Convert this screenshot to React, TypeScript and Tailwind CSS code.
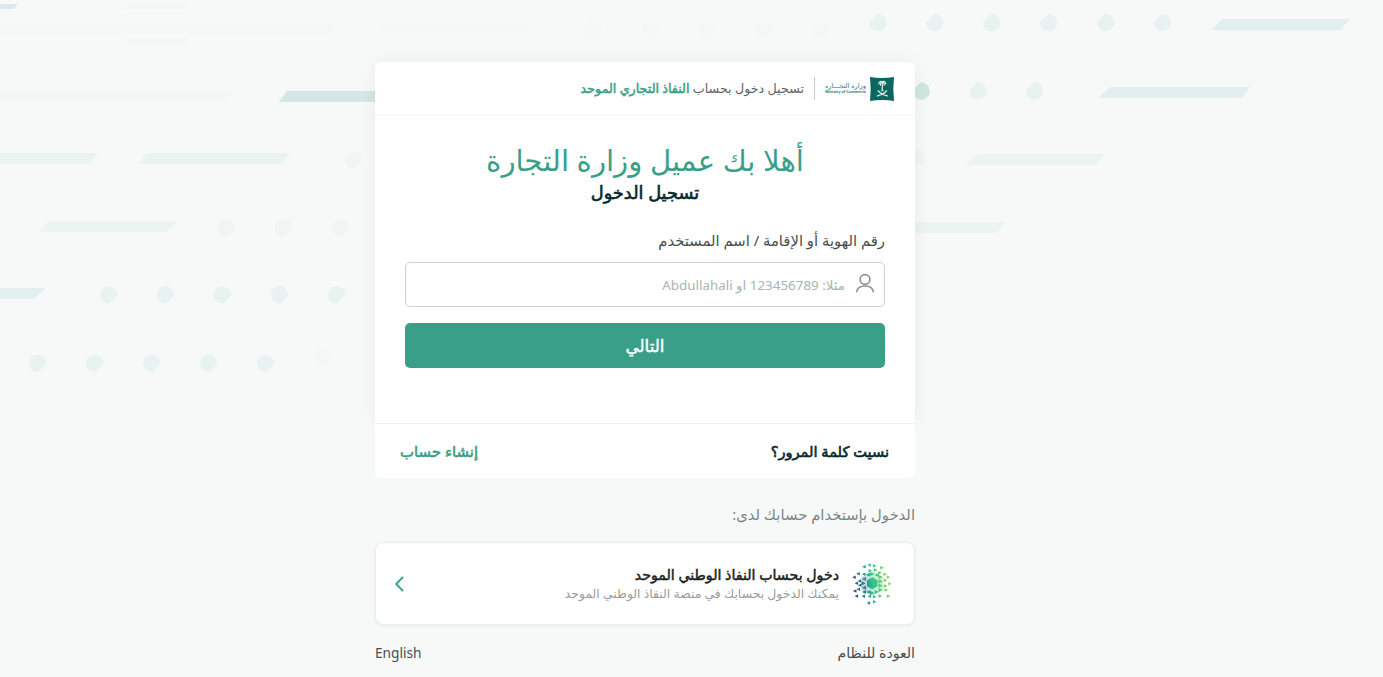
import { ReactNode } from "react";

// Dots and bars of the page backdrop
const leftDots: { x: number; y: number; fill: string }[] = [
  { x: 354, y: 160, fill: "#eef5f3" },
  { x: 226.5, y: 228, fill: "#eef5f3" },
  { x: 283.2, y: 228, fill: "#eef5f3" },
  { x: 340, y: 228, fill: "#eef5f3" },
  { x: 108.6, y: 294.8, fill: "#e8f2f0" },
  { x: 165.5, y: 294.8, fill: "#e8f2f0" },
  { x: 222.5, y: 294.8, fill: "#e8f2f0" },
  { x: 279.4, y: 294.8, fill: "#e8f2f0" },
  { x: 336.3, y: 294.8, fill: "#e8f2f0" },
  { x: 37.6, y: 363.3, fill: "#e8f2f0" },
  { x: 94.6, y: 363.3, fill: "#e8f2f0" },
  { x: 151.6, y: 363.3, fill: "#e8f2f0" },
  { x: 208.6, y: 363.3, fill: "#e8f2f0" },
  { x: 265.6, y: 363.3, fill: "#e8f2f0" },
  { x: 323, y: 356.5, fill: "#f3f7f7" },
  { x: 593, y: 30, fill: "#f3f7f7" },
  { x: 650, y: 30, fill: "#f3f7f7" },
  { x: 707, y: 30, fill: "#f3f7f7" },
  { x: 764, y: 30, fill: "#f3f7f7" },
  { x: 820.6, y: 30, fill: "#f3f7f7" },
];

const rightDots: { x: number; y: number; fill: string }[] = [
  { x: 878, y: 22.7, fill: "#e8f2f0" },
  { x: 934.8, y: 22.7, fill: "#e8f2f0" },
  { x: 991.8, y: 22.7, fill: "#e8f2f0" },
  { x: 1048.8, y: 22.7, fill: "#e8f2f0" },
  { x: 1105.7, y: 22.7, fill: "#e8f2f0" },
  { x: 1162.5, y: 22.7, fill: "#e8f2f0" },
  { x: 921.3, y: 91.2, fill: "#cfe7e0" },
  { x: 977.8, y: 91.2, fill: "#e8f2f0" },
  { x: 1034.8, y: 91.2, fill: "#e8f2f0" },
  { x: 917, y: 157.7, fill: "#eef5f3" },
];

const bars: { points: string; fill: string }[] = [
  { points: "0,4 18,4 14,9 0,9", fill: "#d9eaea" },
  { points: "0,23.3 336,23.3 328,33.3 0,33.3", fill: "#f4f7f7" },
  { points: "387,23.3 529,23.3 519,34 379,34", fill: "#f4f7f7" },
  { points: "122,4 189,4 189,9 122,9", fill: "#f4f7f6" },
  { points: "122,38 189,38 189,43 122,43", fill: "#f4f7f6" },
  { points: "0,91.7 235,91.7 225,101.7 0,101.7", fill: "#f4f7f7" },
  { points: "287,91 400,91 390,102 278.5,102", fill: "#d5e6e8" },
  { points: "0,153 98,153 89,163.7 0,163.7", fill: "#ebf3f2" },
  { points: "146.5,153 290.5,153 281,163.7 138.5,163.7", fill: "#eaf3f2" },
  { points: "48,221 178,221 167,231.7 40,231.7", fill: "#ecf3f3" },
  { points: "0,288 45.5,288 34,299 0,299", fill: "#e4efef" },
  { points: "1222,19 1349.5,19 1341,30.3 1211,30.3", fill: "#e3efee" },
  { points: "1110,87 1250.5,87 1242,98 1098,98", fill: "#e3efee" },
  { points: "977,154 1104.5,154 1095.5,165 965.5,165", fill: "#ecf3f3" },
  { points: "880,222 1005,222 996.5,233 870,233", fill: "#ebf4f3" },
];

// x, y, direction (-1 points left, 1 points right)
const shards: [number, number, number][] = [
  [72, 48, -1], [87, 43, -1], [104, 45, 1], [126, 51, 1],
  [91, 60, 1], [107, 58, 1], [54, 69, -1], [42, 80, -1], [71, 71, -1],
  [120, 66, 1], [136, 71, 1], [146, 80, 1], [58, 91, -1], [49, 98, -1],
  [59, 104, -1], [44, 121, -1], [55, 116, -1], [49, 136, -1],
  [137, 89, 1], [150, 99, 1], [137, 106, 1], [139, 118, 1], [146, 137, 1],
  [70, 137, -1], [88, 137, -1], [104, 138, 1], [121, 136, 1],
  [85, 157, -1], [104, 153, 1],
];

// tighter ring around the hexagon, drawn larger
const innerShards: [number, number, number][] = [
  [84, 72, -1], [97, 70, 1], [110, 73, -1], [122, 79, 1],
  [72, 85, -1], [71, 98, 1], [72, 111, -1], [72, 124, -1],
  [122, 92, 1], [122, 105, 1], [122, 118, 1],
  [85, 124, -1], [97, 127, 1], [110, 124, 1],
];

const toPath = (list: [number, number, number][], r: number) =>
  list.map(([x, y, s]) => `M${x + r * s} ${y}L${x - r * s} ${y - r}V${y + r}Z`).join("");

const DROP = "M8.5 .9 1.6 7.9Q.4 9.2-1 8.7A8.7 8.7 0 1 1 8.7-1.2Q9.1 .2 8.5 .9Z";

function Backdrop() {
  return (
    <svg className="absolute inset-0 h-full w-full" viewBox="0 0 1383 677" aria-hidden="true">
      {bars.map((b) => (
        <polygon key={b.points} points={b.points} fill={b.fill} />
      ))}
      {leftDots.map((d) => (
        <path key={`${d.x}-${d.y}`} transform={`translate(${d.x} ${d.y})`} d={DROP} fill={d.fill} />
      ))}
      {rightDots.map((d) => (
        <path key={`${d.x}-${d.y}`} transform={`translate(${d.x} ${d.y}) rotate(180)`} d={DROP} fill={d.fill} />
      ))}
    </svg>
  );
}

function MinistryEmblem() {
  return (
    <svg className="mt-0.5 h-6 w-6 shrink-0" viewBox="0 0 24 24" fill="none">
      <path d="M0 0Q12 1.8 24 0Q22.6 12 24 24Q12 22.2 0 24Q1.4 12 0 0Z" fill="#0d6660" />
      <g stroke="#e6f2f0" strokeLinecap="round">
        <path d="M12.3 5v8.5" strokeWidth="1.2" />
        <path
          d="M12.3 5Q9.8 3.3 8.8 6.8M12.3 5Q14.8 3.3 15.8 6.8M12.3 5Q10.4 5.2 10.4 8.2M12.3 5Q14.2 5.2 14.2 8.2"
          strokeWidth="1.2"
        />
        <path d="M11.2 13.7h2.2" strokeWidth=".8" />
        <path d="M8.2 13.8Q11 17.3 17.3 18.8M16.5 13.8Q13.7 17.3 7.4 18.8" strokeWidth="1.3" />
      </g>
    </svg>
  );
}

function NafathLogo() {
  return (
    <svg className="h-[42px] w-10 shrink-0" viewBox="36 37 120 126">
      <defs>
        <linearGradient id="nafath" gradientUnits="userSpaceOnUse" x1="38" y1="110" x2="154" y2="90">
          <stop offset="0" stopColor="#3b4378" />
          <stop offset=".3" stopColor="#2b8287" />
          <stop offset=".52" stopColor="#30c48d" />
          <stop offset=".75" stopColor="#5bcb69" />
          <stop offset="1" stopColor="#9bdc4c" />
        </linearGradient>
      </defs>
      <g fill="url(#nafath)">
        <path d="M97 62 130 80v38L97 135 64 118V80Z" opacity=".3" />
        <path d="M97 80 113 89v18L97 116 81 107V89Z" />
        <path d={toPath(shards, 5.3)} />
        <path d={toPath(innerShards, 6.2)} />
      </g>
    </svg>
  );
}

function UserIcon() {
  return (
    <svg className="-mt-1 h-5 w-5 shrink-0" viewBox="0 0 20 20" fill="none" stroke="#8f9191" strokeWidth="1.6" strokeLinecap="round">
      <circle cx="10" cy="6.5" r="4.9" />
      <path d="M1.7 18.7C2.4 14.8 5.7 13 10 13s7.600 1.800 8.300 5.700" />
    </svg>
  );
}

function Line({ className, children }: { className: string; children: ReactNode }) {
  return <span className={`block whitespace-nowrap ${className}`}>{children}</span>;
}

export default function App() {
  return (
    <div
      dir="rtl"
      className="relative h-[677px] w-full overflow-hidden bg-[#f7f9f9] font-['Noto_Sans','DejaVu_Sans',sans-serif]"
    >
      <Backdrop />

      <main className="relative mr-auto ml-[375px] w-[540px] pt-[62px]">
        <section className="flex h-[361px] flex-col rounded-t-md bg-white shadow-[0_0_18px_rgba(0,0,0,0.06)]">
          <header className="flex h-[54px] items-center rounded-t-md border-b-2 border-[#fafafa] px-[21px]">
            <MinistryEmblem />
            <div className="mr-1 flex w-[41px] flex-col items-start text-[#2b7a75]">
              <Line className="text-[6.6px] leading-[7px]">وزارة التجـــارة</Line>
              <Line className="text-[3.7px] leading-[5px] font-bold">Ministry of Commerce</Line>
            </div>
            <div className="mx-2.5 h-[23px] w-px bg-[#c9cccc]" />
            <Line className="text-[12.7px] leading-5 text-[#5f6566]">
              تسجيل دخول بحساب{" "}
              <span className="text-[#3a9f89] [-webkit-text-stroke:0.5px]">النفاذ التجاري الموحد</span>
            </Line>
          </header>

          <div className="flex flex-1 flex-col px-[30px] pt-[26px]">
            <h1 className="flex h-9 items-center justify-center">
              <Line className="text-[29.2px] leading-9 text-[#3a9f89]">أهلا بك عميل وزارة التجارة</Line>
            </h1>
            <h2 className="flex h-7 items-center justify-center">
              <Line className="text-[17.8px] leading-7 text-[#06292d] [-webkit-text-stroke:0.6px]">تسجيل الدخول</Line>
            </h2>
            <label className="mt-[22px] flex h-6 items-center">
              <Line className="text-[14.8px] leading-6 text-[#4a4d4e]">رقم الهوية أو الإقامة / اسم المستخدم</Line>
            </label>
            <div className="mt-2.5 flex h-[45px] items-center gap-2.5 rounded-[5px] border border-[#cfd2da] bg-white px-[9px]">
              <UserIcon />
              <Line className="text-[13.4px] leading-6 text-[#a9b4b4]">مثلا: 123456789 او Abdullahali</Line>
            </div>
            <button className="mt-4 flex h-[45px] items-center justify-center rounded-[5px] bg-[#3a9f89]">
              <Line className="text-[16.8px] leading-6 text-white [-webkit-text-stroke:0.4px]">التالي</Line>
            </button>
          </div>
        </section>

        <div className="flex h-[55px] items-center justify-between rounded-b-md border-t border-[#eef1f1] bg-white pr-[26px] pl-[25px]">
          <Line className="text-[14.6px] leading-6 text-[#06292d] [-webkit-text-stroke:0.6px]">نسيت كلمة المرور؟</Line>
          <Line className="text-[14.9px] leading-6 text-[#3a9f89] [-webkit-text-stroke:0.6px]">إنشاء حساب</Line>
        </div>

        <div className="mt-6 flex h-6 items-center">
          <Line className="text-[14.8px] leading-6 text-[#7b8485]">الدخول بإستخدام حسابك لدى:</Line>
        </div>

        <div className="mt-4 flex h-[83px] items-center rounded-lg border border-[#e9eeee] bg-white pr-[22px] pl-[18px] shadow-[0_1px_3px_rgba(0,0,0,0.06)]">
          <NafathLogo />
          <div className="mr-[13px] flex flex-1 flex-col items-start">
            <Line className="text-[14.2px] leading-5 text-[#1c1f1f] [-webkit-text-stroke:0.5px]">دخول بحساب النفاذ الوطني الموحد</Line>
            <Line className="text-[12.4px] leading-[18px] text-[#9a9c9c]">
              يمكنك الدخول بحسابك في منصة النفاذ الوطني الموحد
            </Line>
          </div>
          <svg className="h-4 w-[11px]" viewBox="0 0 11 16" fill="none" stroke="#3a9f89" strokeWidth="1.8">
            <path d="M9 1 2.2 8 9 15" />
          </svg>
        </div>

        <footer className="mt-4 flex h-6 items-center justify-between text-[#484e4f]">
          <Line className="text-[14.1px] leading-6">العودة للنظام</Line>
          <Line className="text-[13.7px] leading-6">English</Line>
        </footer>
      </main>
    </div>
  );
}
